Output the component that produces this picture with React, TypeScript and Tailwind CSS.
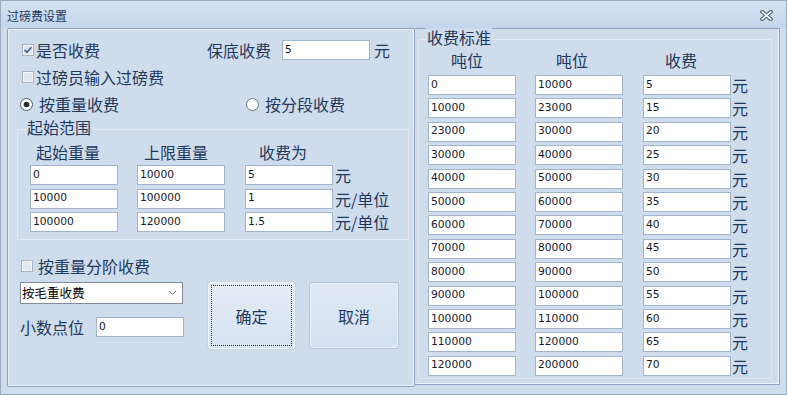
import React from "react";

const CJK = "font-['Noto_Sans_CJK_SC','Noto_Sans',sans-serif]";
const NUM = "font-['DejaVu_Sans','Noto_Sans_CJK_SC',sans-serif]";
const BG = "bg-[#cfdcec]";

function Field({ v, w = "w-[88px]" }: { v: string; w?: string }) {
  return (
    <div
      className={`${w} h-[20px] shrink-0 bg-white border border-[#a2b4cc] flex items-center pl-[2px] ${NUM} text-[10.7px] leading-none text-[#161c2c]`}
    >
      {v}
    </div>
  );
}

function CheckBox({ checked }: { checked?: boolean }) {
  return (
    <svg width="12" height="12" viewBox="0 0 12 12" className="shrink-0">
      <rect x="0.5" y="0.5" width="11" height="11" fill="#e4e8ee" stroke="#a9b3c1" />
      <rect x="1.5" y="1.5" width="9" height="9" fill="none" stroke="#f3f5f8" />
      {checked && (
        <path d="M2.6 5.8 L4.9 8.2 L9.4 3.2" stroke="#42618d" strokeWidth="1.7" fill="none" />
      )}
    </svg>
  );
}

function Radio({ checked }: { checked?: boolean }) {
  return (
    <svg width="13" height="13" viewBox="0 0 13 13" className="shrink-0">
      <circle cx="6.5" cy="6.5" r="6" fill="#ffffff" stroke={checked ? "#4f5866" : "#6b7686"} />
      {checked && <circle cx="6.5" cy="6.5" r="2.8" fill="#262a31" />}
    </svg>
  );
}

const leftRows: [string, string, string, string][] = [
  ["0", "10000", "5", "元"],
  ["10000", "100000", "1", "元/单位"],
  ["100000", "120000", "1.5", "元/单位"],
];

const rightRows: [string, string, string][] = [
  ["0", "10000", "5"],
  ["10000", "23000", "15"],
  ["23000", "30000", "20"],
  ["30000", "40000", "25"],
  ["40000", "50000", "30"],
  ["50000", "60000", "35"],
  ["60000", "70000", "40"],
  ["70000", "80000", "45"],
  ["80000", "90000", "50"],
  ["90000", "100000", "55"],
  ["100000", "110000", "60"],
  ["110000", "120000", "65"],
  ["120000", "200000", "70"],
];

export default function App() {
  return (
    <div
      className={`w-[787px] h-[395px] ${BG} border border-[#9aaac0] flex flex-col overflow-hidden ${CJK} text-[#1e395b]`}
    >
      {/* title bar */}
      <div className="h-[27px] shrink-0 flex items-end justify-between pb-[4px] pl-[6px] pr-[13px] bg-gradient-to-b from-[#d4e2f3] to-[#c4d6ec]">
        <span className="text-[12px] leading-[16px] text-[#1e395b]">过磅费设置</span>
        <svg width="13" height="11" viewBox="0 0 13 11" className="mb-[3px]">
          <path d="M2.2 1.8 L10.8 9.2 M10.8 1.8 L2.2 9.2" stroke="#56657a" strokeWidth="3.8" strokeLinecap="square" />
          <path d="M2.2 1.8 L10.8 9.2 M10.8 1.8 L2.2 9.2" stroke="#ffffff" strokeWidth="1.6" strokeLinecap="square" />
        </svg>
      </div>

      {/* body */}
      <div className="flex pl-[6px]">
        {/* left panel */}
        <div className="w-[408px] h-[359px] shrink-0 border border-[#8fa3c0] rounded-[2px] shadow-[inset_1px_1px_0_#e9f0f8,inset_-1px_-1px_0_#e9f0f8] flex flex-col text-[16px] leading-[20px]">
          {/* row 1 */}
          <div className="mt-[11px] h-[20px] flex items-center pl-[14px]">
            <div className="w-[185px] flex items-center">
              <CheckBox checked />
              <span className="ml-[2px]">是否收费</span>
            </div>
            <span className="w-[64px]">保底收费</span>
            <div className="ml-[11px]">
              <Field v="5" />
            </div>
            <span className="ml-[4px]">元</span>
          </div>
          {/* row 2 */}
          <div className="mt-[7px] h-[20px] flex items-center pl-[14px]">
            <CheckBox />
            <span className="ml-[2px]">过磅员输入过磅费</span>
          </div>
          {/* row 3 */}
          <div className="mt-[7px] h-[20px] flex items-center pl-[12px]">
            <div className="w-[226px] flex items-center">
              <Radio checked />
              <span className="ml-[6px]">按重量收费</span>
            </div>
            <Radio />
            <span className="ml-[6px]">按分段收费</span>
          </div>

          {/* group 起始范围 */}
          <div className="ml-[9px] mt-[15px] w-[392px] h-[111px] border border-[#e3e9f1] flex flex-col">
            <span className={`ml-[8px] -mt-[12px] px-[1px] w-fit ${BG} leading-[18px]`}>起始范围</span>
            <div className="mt-[7px] flex pl-[12px] leading-[18px]">
              <span className="w-[88px] pl-[6px]">起始重量</span>
              <span className="ml-[19px] w-[88px] pl-[7px]">上限重量</span>
              <span className="ml-[20px] w-[88px] pl-[14px]">收费为</span>
            </div>
            <div className="mt-[4px] flex flex-col gap-[3.5px] pl-[12px]">
              {leftRows.map((r, i) => (
                <div key={i} className="flex items-center h-[20px]">
                  <Field v={r[0]} />
                  <div className="ml-[19px]">
                    <Field v={r[1]} />
                  </div>
                  <div className="ml-[20px]">
                    <Field v={r[2]} />
                  </div>
                  <span className="ml-[2px]">{r[3]}</span>
                </div>
              ))}
            </div>
          </div>

          {/* 按重量分阶收费 */}
          <div className="mt-[16px] h-[20px] flex items-center pl-[13px]">
            <CheckBox />
            <span className="ml-[5px]">按重量分阶收费</span>
          </div>

          {/* bottom */}
          <div className="mt-[6px] flex pl-[12px]">
            <div className="w-[164px] flex flex-col">
              <div className="w-[163px] h-[22px] bg-white border border-[#828c9b] flex items-center justify-between pl-[1px] pr-[5px]">
                <span className="text-[12.5px] leading-none text-black">按毛重收费</span>
                <svg width="9" height="6" viewBox="0 0 9 6">
                  <path d="M1 1 L4.5 4.5 L8 1" stroke="#6e6e6e" strokeWidth="1" fill="none" />
                </svg>
              </div>
              <div className="mt-[13px] h-[20px] flex items-center">
                <span className="w-[76px]">小数点位</span>
                <Field v="0" />
              </div>
            </div>
            <div className="ml-[24px] w-[87px] h-[67px] rounded-[3px] border border-[#f2f6fb] bg-gradient-to-b from-[#e3ecf7] to-[#d6e2f1] shadow-[0_0_0_1px_#c4d3e6] p-[2px]">
              <div className="w-full h-full border border-dotted border-[#26364c] flex items-center justify-center">
                确定
              </div>
            </div>
            <div className="ml-[14px] w-[90px] h-[67px] rounded-[3px] border border-[#b5c5da] bg-gradient-to-b from-[#dfe9f5] to-[#d4e1f0] shadow-[inset_0_0_0_1px_#e9f0f8] flex items-center justify-center">
              取消
            </div>
          </div>
        </div>

        {/* right panel */}
        <div className="w-[365px] h-[357px] shrink-0 border border-l-0 border-[#8fa3c0] shadow-[inset_-1px_-1px_0_#e9f0f8] flex flex-col text-[16px] leading-[20px]">
          <div className="ml-[3px] mt-[10px] w-[354px] h-[340px] border border-[#e3e9f1] flex flex-col">
            <span className={`ml-[7px] -mt-[12px] px-[1px] w-fit ${BG} leading-[18px]`}>收费标准</span>
            <div className="mt-[5px] flex pl-[9px] leading-[18px]">
              <span className="w-[88px] pl-[23px]">吨位</span>
              <span className="ml-[19px] w-[88px] pl-[21px]">吨位</span>
              <span className="ml-[20px] w-[88px] pl-[22px]">收费</span>
            </div>
            <div className="mt-[6px] flex flex-col gap-[3.4px] pl-[9px]">
              {rightRows.map((r, i) => (
                <div key={i} className="flex items-center h-[20px]">
                  <Field v={r[0]} />
                  <div className="ml-[19px]">
                    <Field v={r[1]} />
                  </div>
                  <div className="ml-[20px]">
                    <Field v={r[2]} />
                  </div>
                  <span className="ml-[1px]">元</span>
                </div>
              ))}
            </div>
          </div>
        </div>
      </div>
    </div>
  );
}
